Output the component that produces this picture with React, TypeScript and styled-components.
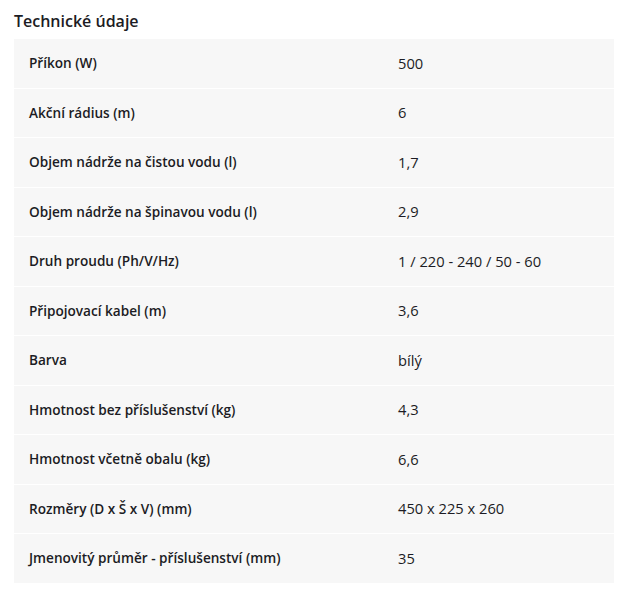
import React from "react";
import styled, { createGlobalStyle } from "styled-components";

const Global = createGlobalStyle`
  html, body { margin: 0; padding: 0; background: #fff; }
  body { font-family: "Open Sans", "Noto Sans", sans-serif; color: #1c1c24; }
`;

const Section = styled.section`
  padding: 10px 12px 0 14px;
  width: 600px;
`;

const Title = styled.h2`
  margin: 0 0 7px 0;
  font-size: 16px;
  line-height: 22px;
  font-weight: 600;
  color: #1c1c24;
`;

const Table = styled.div`
  display: flex;
  flex-direction: column;
  background: #f7f7f7;
`;

const Row = styled.div`
  display: grid;
  grid-template-columns: 369px 1fr;
  height: 48.5px;
  align-items: center;
  border-bottom: 1px solid #fff;
  &:last-child { border-bottom: none; }
`;

const Cell = styled.div<{ $label?: boolean }>`
  padding: 0 15px;
  margin-top: -1px;
  font-size: ${(p) => (p.$label ? "13.6px" : "14.7px")};
  font-weight: ${(p) => (p.$label ? 600 : 400)};
  color: #1c1c24;
`;

const rows: [string, string][] = [
  ["Příkon (W)", "500"],
  ["Akční rádius (m)", "6"],
  ["Objem nádrže na čistou vodu (l)", "1,7"],
  ["Objem nádrže na špinavou vodu (l)", "2,9"],
  ["Druh proudu (Ph/V/Hz)", "1 / 220 - 240 / 50 - 60"],
  ["Připojovací kabel (m)", "3,6"],
  ["Barva", "bílý"],
  ["Hmotnost bez příslušenství (kg)", "4,3"],
  ["Hmotnost včetně obalu (kg)", "6,6"],
  ["Rozměry (D x Š x V) (mm)", "450 x 225 x 260"],
  ["Jmenovitý průměr - příslušenství (mm)", "35"],
];

export default function App() {
  return (
    <>
      <Global />
      <Section>
        <Title>Technické údaje</Title>
        <Table>
          {rows.map(([k, v]) => (
            <Row key={k}>
              <Cell $label>{k}</Cell>
              <Cell>{v}</Cell>
            </Row>
          ))}
        </Table>
      </Section>
    </>
  );
}
